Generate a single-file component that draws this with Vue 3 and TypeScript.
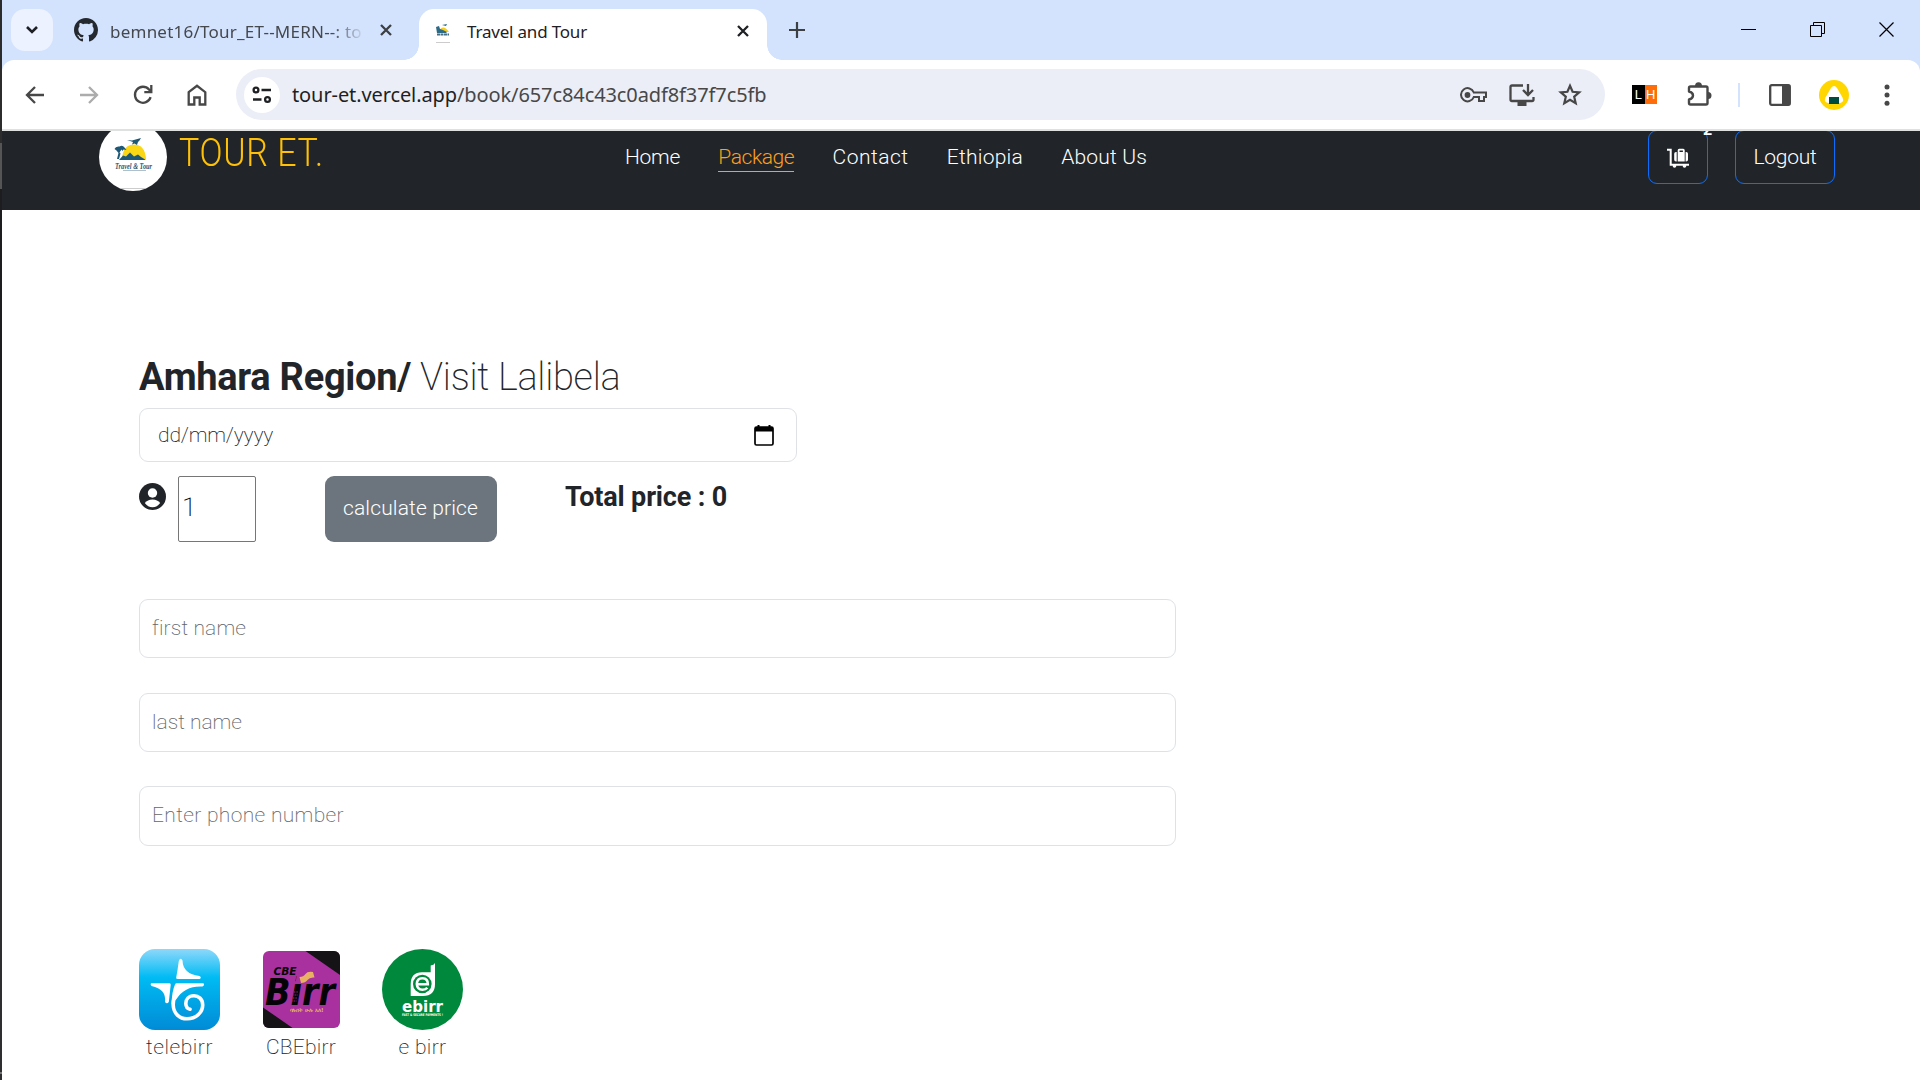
<script setup lang="ts">
interface Label {
  label: string
  spacing: number
}

const links: Label[] = [
  { label: 'Home', spacing: -0.28 },
  { label: 'Package', spacing: -0.43 },
  { label: 'Contact', spacing: 0.49 },
  { label: 'Ethiopia', spacing: 0.21 },
  { label: 'About Us', spacing: 0.2 },
]
const fields: Label[] = [
  { label: 'first name', spacing: 0.15 },
  { label: 'last name', spacing: 0 },
  { label: 'Enter phone number', spacing: 0.33 },
]
</script>

<template>
  <div class="screen">
    <div class="edge"></div>
    <div class="window">
      <div class="tabs">
        <span class="tabsearch"><svg width="14" height="10" viewBox="0 0 14 10"><path d="M2 2l5 5 5-5" fill="none" stroke="#1f2023" stroke-width="2.6" /></svg></span>
        <svg class="gh" width="24" height="24" viewBox="0 0 16 16"><path fill="#24292f" d="M8 0C3.58 0 0 3.58 0 8c0 3.54 2.29 6.53 5.47 7.59.4.07.55-.17.55-.38 0-.19-.01-.82-.01-1.49-2.01.37-2.53-.49-2.69-.94-.09-.23-.48-.94-.82-1.13-.28-.15-.68-.52-.01-.53.63-.01 1.08.58 1.23.82.72 1.21 1.87.87 2.33.66.07-.52.28-.87.51-1.07-1.78-.2-3.64-.89-3.64-3.95 0-.87.31-1.59.82-2.15-.08-.2-.36-1.02.08-2.12 0 0 .67-.21 2.2.82.64-.18 1.32-.27 2-.27s1.36.09 2 .27c1.53-1.04 2.2-.82 2.2-.82.44 1.1.16 1.92.08 2.12.51.56.82 1.27.82 2.15 0 3.07-1.87 3.75-3.65 3.95.29.25.54.73.54 1.48 0 1.07-.01 1.93-.01 2.2 0 .21.15.46.55.38A8.01 8.01 0 0 0 16 8c0-4.42-3.58-8-8-8z" /></svg>
        <span class="tab1">bemnet16/Tour_ET--MERN--: to</span>
        <svg class="x1" width="12" height="12" viewBox="0 0 12 12"><path d="M1 1l10 10M11 1L1 11" stroke="#3c4043" stroke-width="2.3" /></svg>
        <div class="active">
          <svg class="fav" width="14" height="20" viewBox="0 0 14 20"><path d="M2 8Q7-1 13 8Z" fill="#f6cf1c" /><path d="M0 3l3-1 1 3 3 1 4 2-1 1H1zM6 1l5-1-1 2z" fill="#2c6a86" /><path d="M1 10.500h12" stroke="#476c86" stroke-width="2" stroke-dasharray="3 .5" /><path d="M0 18.500h14" stroke="#ccc" stroke-width="1" /></svg>
          <span class="ttl">Travel and Tour</span>
          <svg width="12" height="12" viewBox="0 0 12 12"><path d="M1 1l10 10M11 1L1 11" stroke="#1f2023" stroke-width="2.3" /></svg>
        </div>
        <svg class="plus" width="16" height="16" viewBox="0 0 16 16"><path d="M8 0v16M0 8h16" stroke="#3c4043" stroke-width="2.2" /></svg>
        <div class="wc">
          <svg width="16" height="16" viewBox="0 0 16 16"><path d="M0 7.500h15" stroke="#000" /></svg>
          <svg width="16" height="16" viewBox="0 0 16 16"><path d="M.5 3.500h11v11H.5zM3.500 3.500v-3h11v11h-3" fill="none" stroke="#000" /></svg>
          <svg width="16" height="16" viewBox="0 0 16 16"><path d="M.5.5l14 14M14.500.5l-14 14" stroke="#000" stroke-width="1.200" /></svg>
        </div>
      </div>
      <div class="bar">
        <svg class="b1" width="20" height="20" viewBox="0 0 20 20"><path d="M19 10H2.500M10 2l-8 8 8 8" fill="none" stroke="#474747" stroke-width="2.300" /></svg>
        <svg class="b2" width="20" height="20" viewBox="0 0 20 20"><path d="M1 10h16.500M10 2l8 8-8 8" fill="none" stroke="#acacac" stroke-width="2.300" /></svg>
        <svg class="b3" width="20" height="20" viewBox="0 0 20 20"><path d="M17.600 12.200A8 8 0 1 1 16 4.500L18 6.800M18.300 0v7.200h-7" fill="none" stroke="#474747" stroke-width="2.300" /></svg>
        <svg class="b4" width="20" height="22" viewBox="0 0 20 22"><path d="M1.700 8.200L10 1.800l8.300 6.400v12.300h-5.600v-7H7.300v7H1.700z" fill="none" stroke="#474747" stroke-width="2.300" /></svg>
        <div class="omni">
          <span class="site"><svg width="20" height="18" viewBox="0 0 20 18"><g fill="none" stroke="#1f2023" stroke-width="2.300"><circle cx="4" cy="4" r="2.400" /><path d="M9.500 4H19M1 13.500h8.500" /><circle cx="15.500" cy="13.500" r="2.400" /></g></svg></span>
          <span class="url"><b>tour-et.vercel.app</b>/book/657c84c43c0adf8f37f7c5fb</span>
          <svg class="key" width="27" height="16" viewBox="0 0 27 16"><path d="M13.800 5.500H26v4.500h-2v4h-5v-4h-5.200A6.600 6.600 0 1 1 13.800 5.500z" fill="none" stroke="#474747" stroke-width="2" /><circle cx="7.500" cy="8" r="2.900" fill="#474747" /></svg>
          <svg class="inst" width="26" height="22" viewBox="0 0 26 22"><path d="M14 1.500H3Q1.500 1.500 1.500 3v12.500Q1.500 17 3 17h20q1.500 0 1.500-1.500V13M19 0v10M14 6l5 5 5-5" fill="none" stroke="#474747" stroke-width="2.300" /><path d="M8.500 17h9v5h-9z" fill="#474747" /></svg>
          <svg class="star" width="24" height="24" viewBox="0 0 24 24"><path d="M12 2.800l2.600 6 6.600.6-5 4.300 1.500 6.500-5.700-3.400-5.700 3.400 1.500-6.500-5-4.300 6.600-.6z" fill="none" stroke="#474747" stroke-width="2.200" /></svg>
        </div>
        <span class="lh"><i>L</i><i>H</i></span>
        <svg class="puz" width="25" height="25" viewBox="0 0 25 25"><path d="M3.500 4.500h15.500q1.500 0 1.500 1.500V21q0 1.500-1.500 1.500H3.500Q2 22.500 2 21V17.500Q6 16.500 6 13.500T2 9.500V6Q2 4.500 3.500 4.500z" fill="none" stroke="#474747" stroke-width="2.400" stroke-linejoin="round" /><path d="M8 4a3.500 3.800 0 0 1 7 0zM21 10a3.500 3.500 0 0 1 0 7z" fill="#474747" /></svg>
        <i class="sep"></i>
        <svg class="pan" width="22" height="22" viewBox="0 0 22 22"><rect x="1.200" y="1.200" width="19.600" height="19.600" rx="1.500" fill="none" stroke="#474747" stroke-width="2.300" /><path d="M13 1h8v20h-8z" fill="#474747" /></svg>
        <svg class="ava" width="30" height="30" viewBox="0 0 30 30"><circle cx="15" cy="15" r="15" fill="#ffd600" /><path d="M12 8q3-4 6 0l5.500 9.500q2 4.500-2.500 5.500H9q-4.500-1-2.500-5.500z" fill="#fff" /><path d="M10 17h10v7H10z" fill="#004d40" /></svg>
        <svg class="dots" width="6" height="22" viewBox="0 0 6 22"><g fill="#474747"><circle cx="3" cy="3" r="2.500" /><circle cx="3" cy="11" r="2.500" /><circle cx="3" cy="19.300" r="2.500" /></g></svg>
      </div>
      <header class="nav">
        <div class="row">
          <svg class="logo" width="68" height="68" viewBox="0 0 68 68"><circle cx="34" cy="34" r="34" fill="#fff" /><path d="M23 36Q24 21.500 35 21.500T47 36Z" fill="#f9d616" /><path d="M15.500 26q1-3 5-2.500 3-2 5 1l2 2.500-3-.5-1 1.500-1-1.500-2 3 1 1-1.500 5.500h-2l1.500-6-2-2.500zM28 17l5 .5 9-2.500-1.500 2.500L39 19l-1 3-2.500-1.500-2.500 1L34 19zM20 37l4-4.500 3 1 4-4 4 4 4-2 3 2.500 5 3z" fill="#1d5877" /><text x="34.500" y="45.500" text-anchor="middle" textLength="37" lengthAdjust="spacingAndGlyphs" class="lt">Travel &amp; Tour</text><path d="M24 47.500h23" stroke="#9bb0bd" stroke-width=".8" /><path d="M22 65.500h24" stroke="#ccc" /></svg>
          <span class="brand"><span>TOUR ET.</span></span>
          <nav class="links"><a v-for="l in links" :key="l.label" :class="{ on: l.label === 'Package' }" :style="{ letterSpacing: l.spacing + 'px' }">{{ l.label }}</a></nav>
          <span class="btn cart"><svg width="22" height="20" viewBox="0 0 22 20"><path d="M0 1.800h3.700v15H22" fill="none" stroke="#fff" stroke-width="2" /><path d="M9.700 4v9.500H9Q7.200 13.500 7.200 11.700V5.800Q7.200 4 9 4zM18.600 4v9.500h.6q1.800 0 1.800-1.800V5.800Q21 4 19.200 4z" fill="#fff" /><path d="M10.700 13.500V2.300Q10.700.8 12.200.8h4Q17.700.8 17.700 2.300V13.500zM12.500 2.600V4h3.400V2.600z" fill="#fff" fill-rule="evenodd" /><circle cx="7.500" cy="18" r="1.800" fill="#fff" /><circle cx="17.500" cy="18" r="1.800" fill="#fff" /></svg><b class="badge">2</b></span>
          <span class="btn out">Logout</span>
        </div>
      </header>
      <main>
        <h1><span>Amhara Region/</span><em>Visit Lalibela</em></h1>
        <div class="date"><span>dd/mm/yyyy</span><svg width="20" height="21" viewBox="0 0 20 21"><path d="M2.500 2h15Q19 2 19 3.500V18.500Q19 20 17.500 20h-15Q1 20 1 18.500V3.500Q1 2 2.500 2z" fill="none" stroke="#000" stroke-width="1.700" /><path d="M1 2h18v4.500H1zM3.500 0h2v3h-2zM14.500 0h2v3h-2z" fill="#000" /></svg></div>
        <div class="calc">
          <svg class="usr" width="27" height="27" viewBox="0 0 27 27"><circle cx="13.500" cy="13.500" r="13.500" fill="#212529" /><circle cx="13.500" cy="10" r="4.700" fill="#fff" /><path d="M5.800 20q2.700-3.500 7.700-3.500t7.700 3.500q-3 4.200-7.700 4.200T5.800 20z" fill="#fff" /></svg>
          <span class="num">1</span>
          <span class="go">calculate price</span>
          <span class="total">Total price : 0</span>
        </div>
        <div class="fields"><div v-for="f in fields" :key="f.label" class="field" :style="{ letterSpacing: f.spacing + 'px' }">{{ f.label }}</div></div>
        <div class="pays">
          <div class="pay">
            <svg width="81" height="81" viewBox="0 0 81 81"><defs><linearGradient id="tg" x1="0" y1="0" x2="0" y2="1"><stop offset="0" stop-color="#8ed8fa" /><stop offset=".35" stop-color="#00bbf4" /><stop offset="1" stop-color="#008bd6" /></linearGradient></defs><rect width="81" height="81" rx="16" fill="url(#tg)" />
              <g fill="#fff"><path d="M39.800 12Q41.500 8 43.500 11.500 44 25 60.500 27q2.500 1.200.3 3H38.500Q37 30 37.200 28.500 38.500 22 39.800 12z" /><path d="M12 34.200H30.500Q32 34.200 31.700 36L29.800 53Q28 55.500 26 53 27.500 40 12.500 37 11 35.500 12 34.200z" /><path d="M37.500 34.200H64.500Q66 36 63.500 37.500 46 36.500 37.500 50L32.500 55Q33 42 36 35.500 36.500 34.200 37.500 34.200z" /></g>
              <path d="M38 40Q34 50 34.200 56C34.500 64.500 40.500 69.800 48 69.800 57.500 69.800 63.700 63 63.700 56 63.700 50 59.500 46.800 55 46.800 49.500 46.800 46.800 50.500 46.800 54.500Q47 59.500 51 60.300" fill="none" stroke="#fff" stroke-width="3.600" stroke-linecap="round" /></svg>
            <p class="l1">telebirr</p>
          </div>
          <div class="pay">
            <svg width="81" height="81" viewBox="0 0 81 81"><defs><clipPath id="cc"><rect x="2" y="2" width="77" height="77" rx="6" /></clipPath></defs><g clip-path="url(#cc)"><path d="M0 0h81v81H0z" fill="#a8319f" /><path d="M44.500 2H81v25.500zM0 57l34.500 24H0z" fill="#151316" /></g><text x="12.500" y="26.300" class="cb" font-size="11" textLength="23" lengthAdjust="spacingAndGlyphs">CBE</text><text x="4" y="56" class="cb" font-size="37" textLength="70" lengthAdjust="spacingAndGlyphs">Birr</text><path d="M35.500 27h11v8h-12z" fill="#a8319f" /><path d="M38.500 28q4 0 6-3t7.500-2l1.500 5.500q-5-.5-7 2.500t-6.500 3z" fill="#e8b163" /><path d="M33 43h4M32.500 46h4M32 49h4M31.500 52h4" stroke="#a8319f" stroke-width=".9" stroke-dasharray="1 .6" /><text x="28.500" y="63" class="am" textLength="34" lengthAdjust="spacingAndGlyphs">ባሉበት ሁሉ አለ!</text></svg>
            <p class="l2">CBEbirr</p>
          </div>
          <div class="pay">
            <svg width="81" height="81" viewBox="0 0 81 81"><circle cx="40.500" cy="40.500" r="40.500" fill="#00893d" /><path d="M28.700 47V35Q28.700 23.500 40 23.300H48.700V16.500Q52 16 53 14V35Q53 47 41 47z" fill="#fff" /><circle cx="40.300" cy="35" r="9.300" fill="#00893d" /><path d="M34.500 35.200h11.300Q46 29.500 40.500 29.300T34.800 35q.3 5.500 5.700 5.700 3.200 0 4.800-2" fill="none" stroke="#fff" stroke-width="2.600" /><text x="20" y="62.500" class="eb" font-size="16" textLength="41" lengthAdjust="spacingAndGlyphs">ebirr</text><text x="20" y="66.800" class="eb" font-size="3.500" textLength="41" lengthAdjust="spacingAndGlyphs">FAST &amp; SECURE PAYMENTS !</text></svg>
            <p class="l3">e birr</p>
          </div>
        </div>
      </main>
    </div>
  </div>
</template>

<style>
body { margin: 0; overflow: hidden; }
</style>
<style scoped>
.screen { display: flex; width: 1920px; height: 1080px; overflow: hidden; font-family: Roboto, 'Liberation Sans', sans-serif; background: #fff; box-sizing: border-box; white-space: nowrap; }
.screen * { box-sizing: border-box; }
svg { display: block; flex: none; }
.edge { width: 2px; background: linear-gradient(#2c2c2d 0 143px, #555 143px 189px, #1d1d1f 189px 700px, #2e2e31 700px 1072px, #777 1072px 1074px, #2e2e31 1074px); }
.window { width: 1918px; background: linear-gradient(#d3e2fd 80px, #fff 80px); }
.tabs { height: 60px; display: flex; align-items: center; font-family: 'Noto Sans', 'Open Sans', sans-serif; font-size: 17px; }
.tabsearch { width: 42px; height: 42px; margin-left: 9px; border-radius: 14px; background: #ecf2ff; display: flex; align-items: center; justify-content: center; }
.gh { margin-left: 21px; }
.tab1 { width: 252px; margin: 3px 0 0 12px; overflow: hidden; line-height: 24px; letter-spacing: .23px; color: #45484d; -webkit-mask-image: linear-gradient(90deg, #000 222px, transparent 255px); mask-image: linear-gradient(90deg, #000 222px, transparent 255px); }
.x1 { margin-left: 18px; }
.active { position: relative; width: 348px; height: 51px; margin: 9px 0 0 27px; padding: 0 18px 7px 17px; border-radius: 15px 15px 0 0; background: #fff; display: flex; align-items: center; color: #1f2023; }
.active::before, .active::after { content: ''; position: absolute; bottom: 0; width: 15px; height: 15px; }
.active::before { left: -15px; background: radial-gradient(circle at 0 0, transparent 14.5px, #fff 15px); }
.active::after { right: -15px; background: radial-gradient(circle at 100% 0, transparent 14.5px, #fff 15px); }
.fav { margin-top: 5px; }
.ttl { flex: 1; margin: 1px 0 0 17px; line-height: 24px; letter-spacing: -.19px; }
.plus { margin-left: 22px; }
.wc { margin-left: auto; margin-right: 25px; display: flex; gap: 53px; }
.bar { height: 71px; border-bottom: 2px solid #dfe0e0; border-radius: 12px 12px 0 0; background: #fff; display: flex; align-items: center; }
.b1 { margin-left: 23px; }
.b2, .b3, .b4 { margin-left: 34px; }
.omni { width: 1369px; height: 51px; margin-left: 29px; border-radius: 26px; background: #ebeef7; display: flex; align-items: center; }
.site { width: 36px; height: 36px; margin-left: 8px; border-radius: 50%; background: #fff; display: flex; align-items: center; justify-content: center; }
.url { flex: 1; margin-left: 12px; font-family: 'Noto Sans', sans-serif; font-size: 20px; line-height: 28px; letter-spacing: -.1px; color: #474747; }
.url b { font-weight: 400; color: #1f1f1f; }
.inst { margin-left: 22px; }
.star { margin: 0 23px; }
.lh { margin-left: 27px; width: 25px; height: 19px; display: flex; }
.lh i { flex: 1; background: #000; color: #fff; font: 400 13px/19px 'Liberation Sans', sans-serif; text-align: center; }
.lh i + i { background: #ff6d0a; }
.puz { margin-left: 30px; }
.sep { width: 2px; height: 24px; margin-left: 26px; background: #d3e2fd; }
.pan { margin-left: 29px; }
.ava { margin-left: 28px; }
.dots { margin-left: 35px; }
.nav { display: flow-root; height: 79px; background: #212529; overflow: hidden; }
.row { height: 68px; margin-top: -8px; padding-left: 97px; display: flex; align-items: center; font-size: 21px; font-weight: 300; color: #fff; }
.lt { font: italic 900 9px 'Liberation Serif', serif; fill: #1d5877; }
.brand { width: 458px; margin-bottom: 8px; padding-left: 12px; font-size: 38px; line-height: 46px; color: #ffc107; }
.brand span { display: inline-block; letter-spacing: .7px; transform: scaleX(.895); transform-origin: 0 50%; }
.links { display: flex; gap: 38.3px; flex: 1; }
.links a { display: block; line-height: 28px; border-bottom: 1px solid transparent; }
.links a.on { color: #ff9f1a; border-color: #ffa500; }
.btn { height: 54px; border: 1px solid #0d6efd; border-radius: 9px; display: flex; align-items: center; justify-content: center; }
.cart { position: relative; width: 60px; padding-top: 2px; }
.badge { position: absolute; left: 54px; top: -11px; font-size: 16px; line-height: 20px; font-weight: 700; }
.out { width: 100px; margin: 0 85px 0 27px; letter-spacing: -.26px; }
main { padding: 144px 0 0 137px; color: #212529; font-size: 21px; font-weight: 200; }
h1 { margin: 0 0 8px; display: flex; font-size: 38px; line-height: 46px; font-weight: 700; letter-spacing: -.28px; }
h1 em { font-style: normal; font-weight: 200; margin-left: 9px; }
.date { width: 658px; height: 54px; border: 1px solid #dee2e6; border-radius: 9px; padding: 0 22px 0 18px; display: flex; align-items: center; justify-content: space-between; letter-spacing: -.19px; }
.calc { margin-top: 14px; height: 66px; display: flex; align-items: flex-start; }
.usr { margin-top: 7px; }
.num { width: 78px; height: 66px; margin-left: 12px; border: 1px solid #767676; border-radius: 2px; padding-left: 3px; font-size: 26px; line-height: 61px; color: #000; }
.go { width: 172px; height: 66px; margin-left: 69px; border-radius: 9px; background: #6c757d; color: #fff; font-weight: 300; line-height: 64px; padding-left: 18px; letter-spacing: .13px; }
.total { margin-left: 68px; font-size: 27px; line-height: 43px; font-weight: 700; letter-spacing: -.17px; }
.fields { margin-top: 57.2px; display: flex; flex-direction: column; gap: 34.4px; }
.field { width: 1037px; height: 59.2px; border: 1px solid #dee2e6; border-radius: 9px; padding-left: 12px; line-height: 56.4px; color: #63666a; }
.pays { margin-top: 103.4px; display: flex; gap: 40.5px; }
.pay p { margin: 0; line-height: 34px; text-align: center; }
.l1 { letter-spacing: .54px; }
.l2 { letter-spacing: .22px; }
.l3 { letter-spacing: .35px; }
.cb { font-family: 'DejaVu Sans', sans-serif; font-weight: 700; font-style: italic; fill: #050305; }
.eb { font-family: 'DejaVu Sans', sans-serif; font-weight: 700; fill: #fff; }
.am { font-family: 'DejaVu Sans', 'Noto Sans', sans-serif; font-size: 5.5px; font-weight: 700; fill: #e8b163; }
</style>
